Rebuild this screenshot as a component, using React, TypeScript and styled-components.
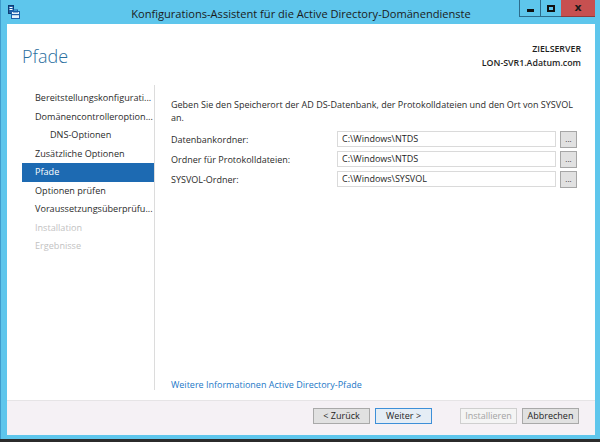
import styled, { createGlobalStyle } from "styled-components";

const GlobalStyle = createGlobalStyle`
  html, body {
    margin: 0;
    padding: 0;
    background: #2b2b2b;
  }
  body {
    font-family: "Open Sans", "Noto Sans", sans-serif;
    color: #1e1e1e;
  }
  * {
    box-sizing: border-box;
  }
`;

const navItems = [
  { label: "Bereitstellungskonfigurati...", sub: false, state: "normal" },
  { label: "Domänencontrolleroption...", sub: false, state: "normal" },
  { label: "DNS-Optionen", sub: true, state: "normal" },
  { label: "Zusätzliche Optionen", sub: false, state: "normal" },
  { label: "Pfade", sub: false, state: "active" },
  { label: "Optionen prüfen", sub: false, state: "normal" },
  { label: "Voraussetzungsüberprüfu...", sub: false, state: "normal" },
  { label: "Installation", sub: false, state: "disabled" },
  { label: "Ergebnisse", sub: false, state: "disabled" },
];

const paths = [
  { label: "Datenbankordner:", value: "C:\\Windows\\NTDS" },
  { label: "Ordner für Protokolldateien:", value: "C:\\Windows\\NTDS" },
  { label: "SYSVOL-Ordner:", value: "C:\\Windows\\SYSVOL" },
];

const WizardIcon = () => (
  <svg width="12" height="14" viewBox="0 0 12 14">
    <rect x="0.5" y="0.5" width="5" height="8" fill="#1d5fa8" stroke="#0f3d73" />
    <rect x="1.5" y="2" width="3" height="1" fill="#ffffff" />
    <rect x="1.5" y="4" width="3" height="1" fill="#ffffff" />
    <rect x="3.5" y="6.5" width="8" height="7" fill="#e8f2fb" stroke="#1d5fa8" />
    <rect x="5.5" y="5" width="4" height="2" fill="none" stroke="#1d5fa8" />
    <rect x="3.5" y="9" width="8" height="1.2" fill="#1d5fa8" />
  </svg>
);

const App = () => {
  return (
    <>
      <GlobalStyle />
      <Screen>
        <Window>
          <TitleBar>
            <IconSlot>
              <WizardIcon />
            </IconSlot>
            <Title>Konfigurations-Assistent für die Active Directory-Domänendienste</Title>
            <Controls>
              <CtrlButton>
                <MinGlyph />
              </CtrlButton>
              <CtrlButton>
                <MaxGlyph />
              </CtrlButton>
              <CloseButton>x</CloseButton>
            </Controls>
          </TitleBar>
          <Body>
            <Header>
              <PageTitle>Pfade</PageTitle>
              <Target>
                <span>ZIELSERVER</span>
                <span>LON-SVR1.Adatum.com</span>
              </Target>
            </Header>
            <Main>
              <Nav>
                {navItems.map((item) => (
                  <NavItem key={item.label} $sub={item.sub} $state={item.state}>
                    {item.label}
                  </NavItem>
                ))}
              </Nav>
              <Content>
                <Intro>
                  Geben Sie den Speicherort der AD DS-Datenbank, der Protokolldateien und den Ort von SYSVOL
                  an.
                </Intro>
                <Form>
                  {paths.map((p) => (
                    <Row key={p.label}>
                      <Label>{p.label}</Label>
                      <PathInput>{p.value}</PathInput>
                      <Browse>...</Browse>
                    </Row>
                  ))}
                </Form>
                <MoreLink>Weitere Informationen Active Directory-Pfade</MoreLink>
              </Content>
            </Main>
            <Footer>
              <Button>&lt; Zurück</Button>
              <Button $default>Weiter &gt;</Button>
              <Button $disabled $gap>
                Installieren
              </Button>
              <Button>Abbrechen</Button>
            </Footer>
          </Body>
        </Window>
        <Taskbar />
      </Screen>
    </>
  );
};

export default App;

const Screen = styled.div`
  width: 600px;
  height: 442px;
  display: flex;
  flex-direction: column;
  overflow: hidden;
`;

const Window = styled.div`
  flex: 1;
  display: flex;
  flex-direction: column;
  background: #5ec6ec;
  border-left: 1px solid #3f9ccc;
  padding: 0 5px 4px 6px;
`;

const TitleBar = styled.div`
  height: 24px;
  position: relative;
  display: flex;
  justify-content: center;
  align-items: center;
  flex-shrink: 0;
`;

const IconSlot = styled.div`
  position: absolute;
  left: 1px;
  top: 5px;
  display: flex;
`;

const Title = styled.div`
  font-size: 11.1px;
  color: #1b1b1b;
  margin-top: 2px;
  white-space: nowrap;
`;

const Controls = styled.div`
  position: absolute;
  right: 0;
  top: 0;
  display: flex;
  height: 17px;
`;

const CtrlButton = styled.div`
  width: 22px;
  height: 17px;
  border: 1px solid #2d6c8c;
  border-top: none;
  margin-right: -1px;
  display: flex;
  align-items: center;
  justify-content: center;
`;

const MinGlyph = styled.div`
  width: 7px;
  height: 3px;
  background: #111;
  margin-top: 4px;
`;

const MaxGlyph = styled.div`
  width: 8px;
  height: 7px;
  border: 2px solid #111;
`;

const CloseButton = styled.div`
  width: 34px;
  height: 17px;
  background: #c75050;
  border-bottom: 1px solid #8e3a3a;
  color: #1a1a1a;
  font-family: "DejaVu Sans", sans-serif;
  font-weight: bold;
  font-size: 11px;
  display: flex;
  align-items: center;
  justify-content: center;
  padding-bottom: 2px;
`;

const Body = styled.div`
  flex: 1;
  background: #ffffff;
  display: flex;
  flex-direction: column;
`;

const Header = styled.div`
  height: 61px;
  display: flex;
  justify-content: space-between;
  align-items: flex-start;
  padding: 18px 14px 0 15px;
  flex-shrink: 0;
`;

const PageTitle = styled.div`
  font-size: 18px;
  font-weight: 300;
  color: #2a6f9e;
  line-height: 28px;
`;

const Target = styled.div`
  display: flex;
  flex-direction: column;
  align-items: flex-end;
  font-size: 8.8px;
  font-weight: 600;
  line-height: 14px;
  color: #1e1e1e;
`;

const Main = styled.div`
  flex: 1;
  display: flex;
  padding-bottom: 10px;
`;

const Nav = styled.div`
  width: 148px;
  flex-shrink: 0;
  border-right: 1px solid #dcdcdc;
  padding: 4px 0 0 15px;
  display: flex;
  flex-direction: column;
`;

const NavItem = styled.div<{ $sub: boolean; $state: string }>`
  width: 132px;
  height: 18.5px;
  line-height: 18.5px;
  font-size: 9.1px;
  white-space: nowrap;
  padding-left: ${(p) => (p.$sub ? 28 : 13)}px;
  color: ${(p) => (p.$state === "active" ? "#ffffff" : p.$state === "disabled" ? "#c2c2c2" : "#2b2b2b")};
  background: ${(p) => (p.$state === "active" ? "#1d6ab2" : "transparent")};
`;

const Content = styled.div`
  flex: 1;
  display: flex;
  flex-direction: column;
  padding: 13px 17px 0 16px;
`;

const Intro = styled.div`
  font-size: 9px;
  line-height: 13px;
  color: #2b2b2b;
`;

const Form = styled.div`
  display: flex;
  flex-direction: column;
  gap: 4px;
  margin-top: 7px;
`;

const Row = styled.div`
  display: flex;
  align-items: center;
  height: 16px;
`;

const Label = styled.div`
  width: 166px;
  font-size: 9px;
  color: #2b2b2b;
`;

const PathInput = styled.div`
  width: 219px;
  height: 16px;
  border: 1px solid #dadada;
  font-size: 9px;
  line-height: 14px;
  padding-left: 4px;
  color: #1e1e1e;
`;

const Browse = styled.div`
  width: 17px;
  height: 17px;
  margin-left: 4px;
  background: #e1e1e1;
  border: 1px solid #a6a6a6;
  font-size: 8px;
  line-height: 14px;
  text-align: center;
  color: #333;
`;

const MoreLink = styled.div`
  margin-top: auto;
  margin-bottom: -2px;
  font-size: 9px;
  color: #1c78c7;
  line-height: 14px;
`;

const Footer = styled.div`
  height: 35px;
  flex-shrink: 0;
  background: #f5f1f5;
  border-top: 1px solid #e6e4e6;
  display: flex;
  justify-content: flex-end;
  align-items: flex-start;
  gap: 5px;
  padding: 7px 16px 0 0;
`;

const Button = styled.div<{ $default?: boolean; $disabled?: boolean; $gap?: boolean }>`
  width: 57px;
  height: 16px;
  margin-left: ${(p) => (p.$gap ? 23 : 0)}px;
  font-size: 9px;
  line-height: 14px;
  text-align: center;
  background: ${(p) => (p.$disabled ? "#f4f4f4" : p.$default ? "#e5edf5" : "#e1e1e1")};
  border: 1px solid ${(p) => (p.$disabled ? "#cfcfcf" : p.$default ? "#3d8fd8" : "#a9a9a9")};
  color: ${(p) => (p.$disabled ? "#a3a3a3" : "#1e1e1e")};
`;

const Taskbar = styled.div`
  height: 3px;
  background: #2b2b2b;
  flex-shrink: 0;
`;
